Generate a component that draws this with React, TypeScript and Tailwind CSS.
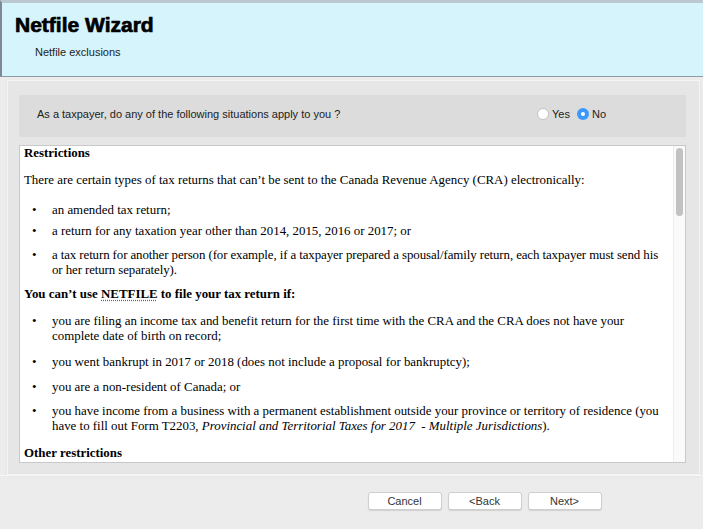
import { useState } from 'react';

const Bullet = ({ children }: { children: React.ReactNode }) => (
  <div className="flex pl-[8px]">
    <span className="w-[20px] shrink-0">•</span>
    <span className="whitespace-nowrap">{children}</span>
  </div>
);

const App = () => {
  const [answer, setAnswer] = useState<'yes' | 'no'>('no');

  return (
    <div className="w-[703px] h-[529px] bg-[#ececec] flex flex-col overflow-hidden font-['Liberation_Sans',sans-serif]">
      {/* Header */}
      <div className="h-[77px] shrink-0 bg-[#d6f4fc] border-t-[3px] border-t-[#bcc8d0] border-b border-b-[#8f9ca2] border-l-2 border-l-[#7d8a94] pl-[13px] pt-[10px]">
        <h1 className="text-[21px] leading-[24px] font-bold text-black [-webkit-text-stroke:0.7px_black]">
          Netfile Wizard
        </h1>
        <p className="text-[11px] text-[#222] pl-[20px] mt-[7px]">Netfile exclusions</p>
      </div>

      {/* Main panel */}
      <div className="mt-[3px] ml-[7px] mr-[3px] h-[395px] shrink-0 bg-[#e6e6e6] border border-[#f4f4f4] shadow-[0_1px_2px_rgba(0,0,0,0.08)] pl-[11px] pr-[13px] pt-[14px] flex flex-col">
        <div className="h-[42px] shrink-0 bg-[#dcdcdc] flex items-center pl-[18px] pr-[80px] pb-[4px] text-[11px] text-[#222]">
          <span className="flex-1">As a taxpayer, do any of the following situations apply to you ?</span>
          <label className="flex items-center gap-[3px] mr-[7px]" onClick={() => setAnswer('yes')}>
            <span
              className={
                answer === 'yes'
                  ? 'w-[12px] h-[12px] rounded-full bg-[#3b99fc] flex items-center justify-center'
                  : 'w-[12px] h-[12px] rounded-full bg-white border border-[#c4c4c4]'
              }
            >
              {answer === 'yes' && <span className="w-[4px] h-[4px] rounded-full bg-white" />}
            </span>
            Yes
          </label>
          <label className="flex items-center gap-[3px]" onClick={() => setAnswer('no')}>
            <span
              className={
                answer === 'no'
                  ? 'w-[12px] h-[12px] rounded-full bg-[#3b99fc] flex items-center justify-center'
                  : 'w-[12px] h-[12px] rounded-full bg-white border border-[#c4c4c4]'
              }
            >
              {answer === 'no' && <span className="w-[4px] h-[4px] rounded-full bg-white" />}
            </span>
            No
          </label>
        </div>

        {/* Content box */}
        <div className="mt-[8px] h-[318px] shrink-0 bg-white border border-[#c9c9c9] flex overflow-hidden">
          <div className="flex-1 pl-[4px] text-[12.9px] leading-[15px] text-black font-['Liberation_Serif',serif] overflow-hidden">
            <p className="font-bold leading-[14px]">Restrictions</p>
            <p className="mt-[13px] whitespace-nowrap">
              There are certain types of tax returns that can’t be sent to the Canada Revenue Agency (CRA) electronically:
            </p>
            <div className="mt-[15px]">
              <Bullet>an amended tax return;</Bullet>
            </div>
            <div className="mt-[6px]">
              <Bullet>a return for any taxation year other than 2014, 2015, 2016 or 2017; or</Bullet>
            </div>
            <div className="mt-[9px] tracking-[-0.1px]">
              <Bullet>
                a tax return for another person (for example, if a taxpayer prepared a spousal/family return, each taxpayer must send his
                <br />
                or her return separately).
              </Bullet>
            </div>
            <p className="mt-[9px] font-bold">
              You can’t use{' '}
              <span className="underline decoration-dotted decoration-[#e03030] underline-offset-2">NETFILE</span> to file
              your tax return if:
            </p>
            <div className="mt-[12px]">
              <Bullet>
                you are filing an income tax and benefit return for the first time with the CRA and the CRA does not have your
                <br />
                complete date of birth on record;
              </Bullet>
            </div>
            <div className="mt-[11px]">
              <Bullet>you went bankrupt in 2017 or 2018 (does not include a proposal for bankruptcy);</Bullet>
            </div>
            <div className="mt-[10px]">
              <Bullet>you are a non-resident of Canada; or</Bullet>
            </div>
            <div className="mt-[9px]">
              <Bullet>
                you have income from a business with a permanent establishment outside your province or territory of residence (you
                <br />
                have to fill out Form T2203, <i>Provincial and Territorial Taxes for 2017&nbsp; - Multiple Jurisdictions</i>).
              </Bullet>
            </div>
            <p className="mt-[12px] font-bold">Other restrictions</p>
          </div>
          {/* Scrollbar */}
          <div className="w-[12px] shrink-0 bg-[#fafafa] border-l border-[#ececec] pt-[2px] flex justify-center">
            <div className="w-[7px] h-[68px] rounded-full bg-[#c2c2c2]" />
          </div>
        </div>
      </div>

      {/* Footer */}
      <div className="flex-1 border-t border-[#f7f7f7] flex justify-center pt-[16px] pl-[266px] gap-[6px]">
        {['Cancel', '<Back', 'Next>'].map((label) => (
          <button
            key={label}
            className="w-[74px] h-[18px] bg-white border border-[#cfcfcf] rounded-[3px] shadow-[0_1px_1px_rgba(0,0,0,0.12)] text-[11px] leading-[16px] text-[#333]"
          >
            {label}
          </button>
        ))}
      </div>
    </div>
  );
};

export default App;
